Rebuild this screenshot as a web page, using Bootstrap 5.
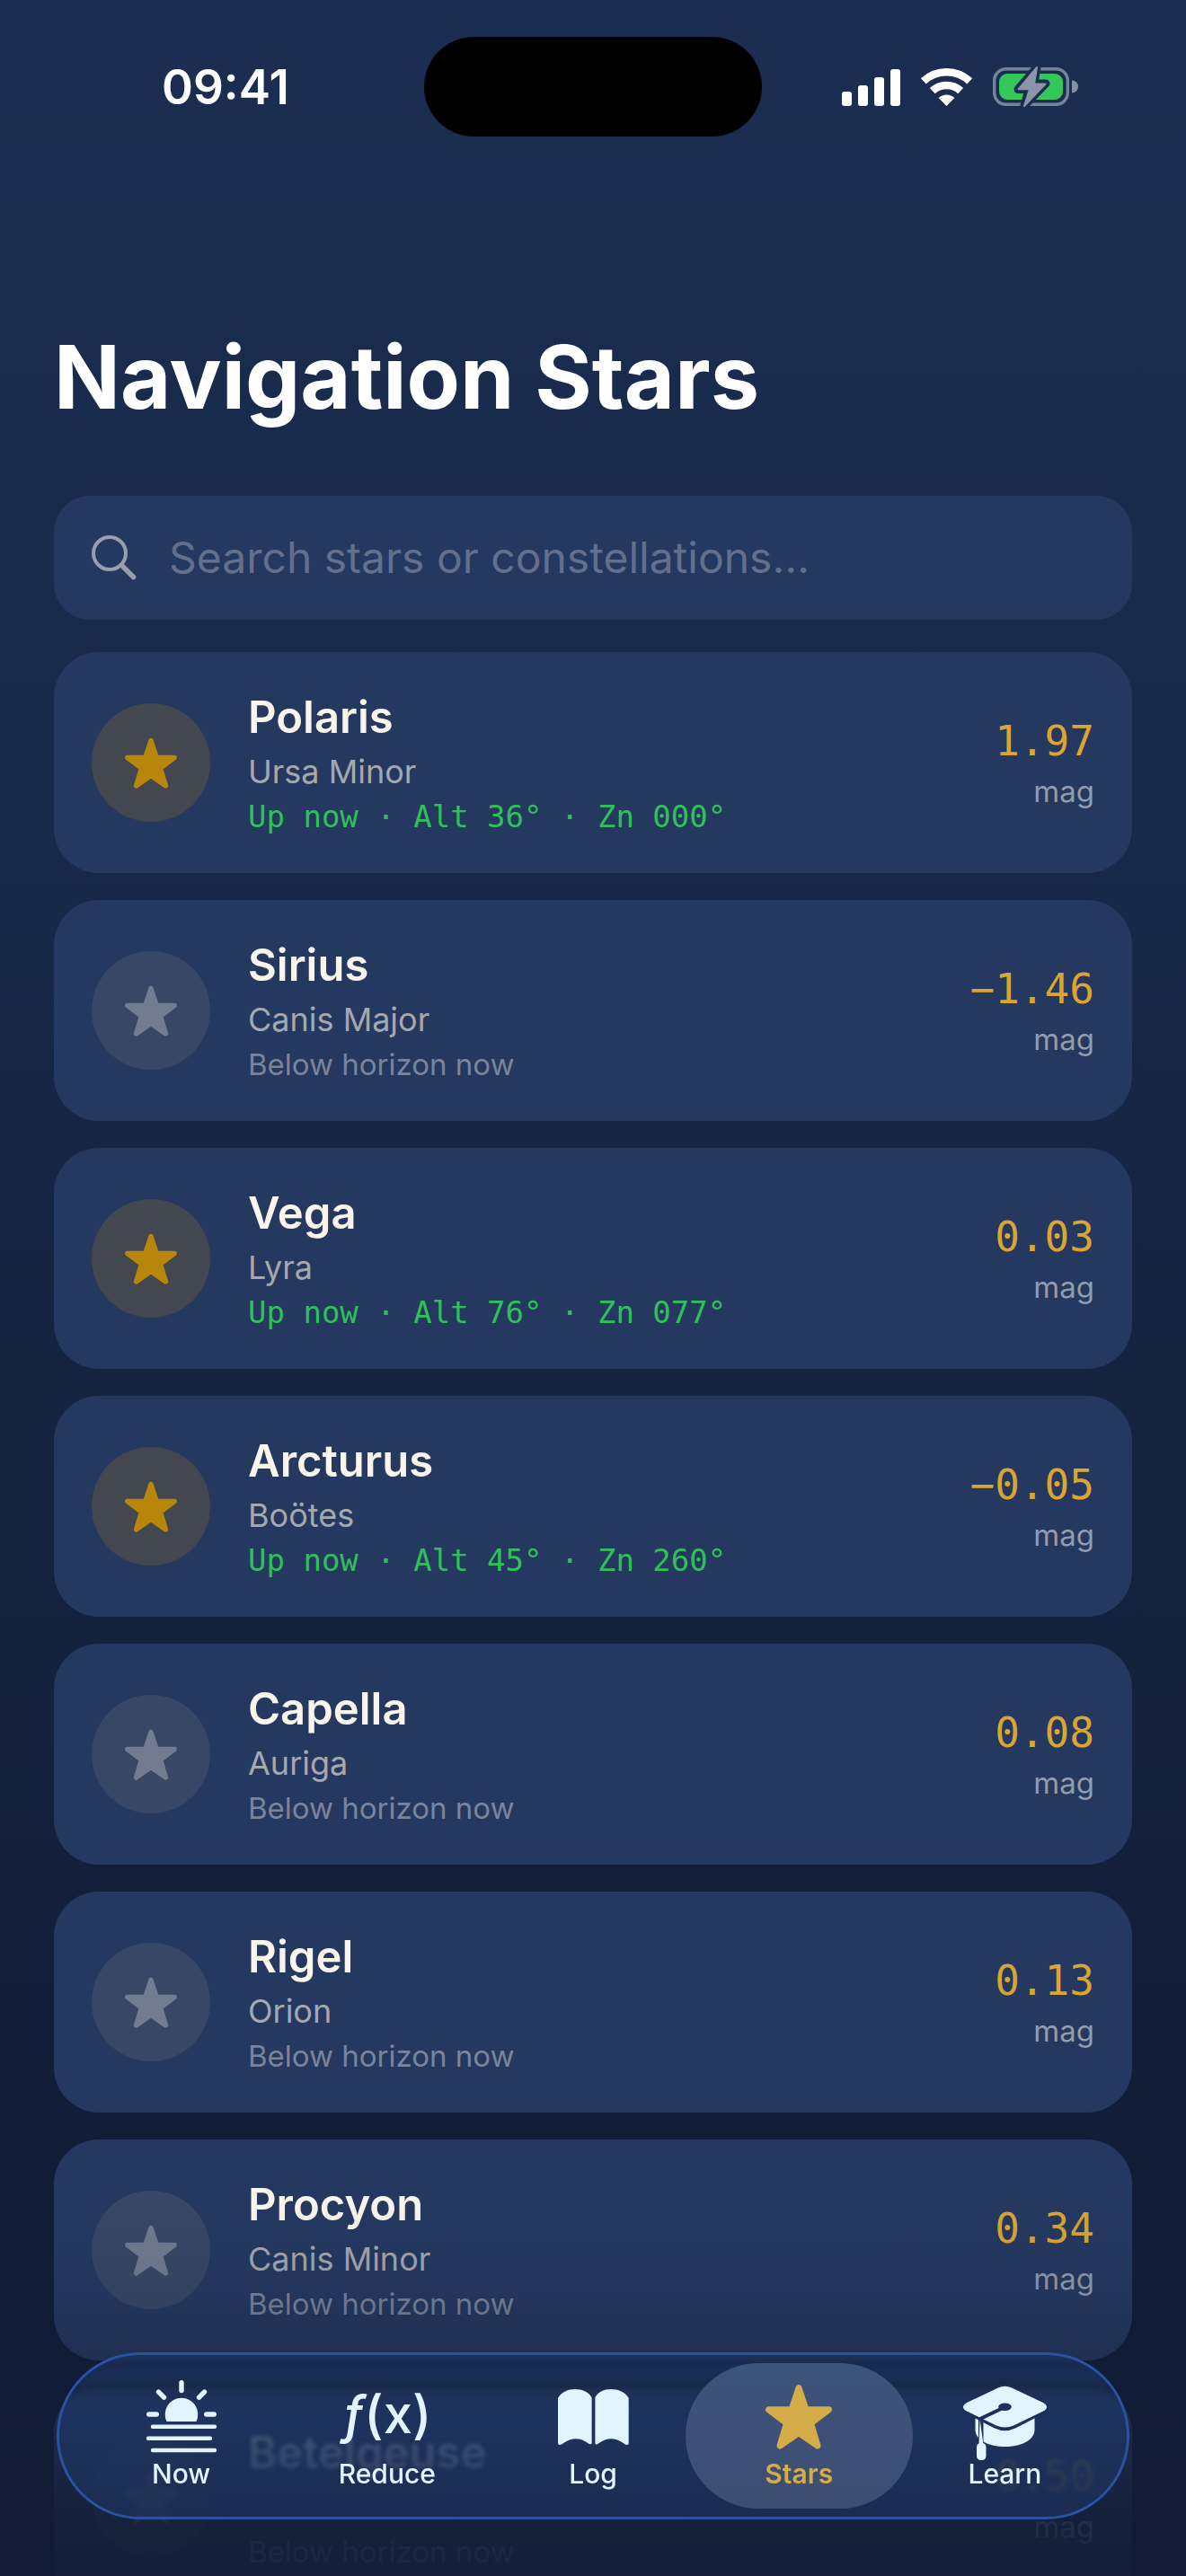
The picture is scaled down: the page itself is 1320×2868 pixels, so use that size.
<!DOCTYPE html>
<html lang="en">
<head>
<meta charset="utf-8">
<meta name="viewport" content="width=device-width, initial-scale=1">
<title>Navigation Stars</title>
<link href="https://cdn.jsdelivr.net/npm/bootstrap@5.3.0/dist/css/bootstrap.min.css" rel="stylesheet">
<style>
  body { font-family: Inter, "Liberation Sans", sans-serif; background: #101b34; color: #fff; }
  .app-shell { background: linear-gradient(180deg, #1b2e51 0%, #182848 33%, #131f3a 75%, #0f1a33 100%); }
  svg { display: block; flex: none; overflow: visible; }

  .status-row { padding-top: 41px; }
  .status-time { padding-left: 180px; font-size: 53px; line-height: 60px; font-weight: 600; }
  .status-icons { padding-right: 122px; gap: 23px; }
  .island { width: 376px; height: 111px; background: #000; border-radius: 56px; }

  .page-body { padding: 208px 60px 0; }
  .page-title { font-size: 97px; line-height: 120px; font-weight: 700; margin-bottom: 72px; }

  .search-box { height: 138px; padding: 0 42px; gap: 36px; border-radius: 40px; background: #25385f; margin-bottom: 36px; color: #989eab; }
  .search-box .form-control, .search-box .form-control:focus { font-size: 48px; line-height: 60px; color: #faf5ea; }
  .search-box .form-control::placeholder { color: #636f8b; opacity: 1; }

  .star-list { gap: 30px; }
  .star-card { min-height: 246px; padding: 0 42px; gap: 42px; border-radius: 50px; background: #25385f; }
  .star-disc { width: 132px; height: 132px; background: #384766; color: #727c90; }
  .star-up .star-disc { background: #424750; color: #b8860b; }
  .star-info, .star-mag { gap: 9px; }
  .star-name { font-size: 49px; line-height: 60px; font-weight: 600; color: #faf5ea; }
  .star-con { font-size: 36px; line-height: 42px; color: #a5a8af; }
  .star-pos { font-size: 33px; line-height: 40px; color: #7b8499; }
  .star-up .star-pos { font-family: "DejaVu Sans Mono", monospace; font-size: 34px; color: #30c05a; }
  .mag-value { font-family: "DejaVu Sans Mono", monospace; font-size: 46px; line-height: 54px; color: #daa532; }
  .mag-unit { font-size: 33px; line-height: 40px; color: #949bab; }

  .scroll-fade { height: 420px; pointer-events: none; background: linear-gradient(180deg, rgba(18,28,53,0) 0%, rgba(18,28,53,.1) 25%, rgba(18,28,53,.3) 43%, rgba(18,28,53,.6) 67%, rgba(18,28,53,.86) 85%, rgba(18,28,53,.92) 100%); }

  .tab-dock { left: 63px; right: 63px; bottom: 63px; height: 186px; padding: 9px 21px; border: 3px solid #2952a3; border-radius: 93px; background: linear-gradient(180deg, rgba(28,47,84,.65) 0%, rgba(30,56,106,.65) 12%, rgba(27,48,84,.65) 20%, rgba(30,56,106,.65) 32%, rgba(30,51,92,.65) 100%); backdrop-filter: blur(2px); }
  .tab-link { margin: 0 -12px; padding: 17px 0 21px; gap: 4px; border-radius: 81px; color: #e2f4ff; font-size: 30px; line-height: 36px; font-weight: 500; text-decoration: none; }
  .tab-link.active { background: linear-gradient(180deg, #3c547b, #3e5078 50%, #3c4f70); color: #d5ad48; font-weight: 600; }
  .tab-icon { height: 84px; }
  .fx-icon { font-size: 58px; line-height: 80px; }
</style>
<script src="https://cdn.jsdelivr.net/npm/bootstrap@5.3.0/dist/js/bootstrap.bundle.min.js"></script>
</head>
<body>
<svg width="0" height="0" class="position-absolute" aria-hidden="true">
  <symbol id="star" viewBox="0 0 76 73">
    <path d="M38 4.5 46 28.8H71.5L51.5 44 59 69 38 54.5 17 69 24.5 44 4.5 28.8H30Z" fill="currentColor" stroke="currentColor" stroke-width="7" stroke-linejoin="round"/>
  </symbol>
</svg>

<div class="app-shell position-relative vh-100 overflow-hidden">
  <header class="status-row d-flex align-items-center">
    <div class="status-time flex-fill w-25">09:41</div>
    <div class="island flex-shrink-0"></div>
    <div class="status-icons flex-fill w-25 d-flex align-items-center justify-content-end">
      <svg width="65" height="42" viewBox="0 0 65 42" fill="#fff" aria-label="Signal">
        <rect x="0" y="26" width="11" height="16" rx="3"/><rect x="18" y="19" width="11" height="23" rx="3"/>
        <rect x="36" y="10" width="11" height="32" rx="3"/><rect x="54" y="1" width="11" height="41" rx="3"/>
      </svg>
      <svg width="57" height="42" viewBox="0 0 57 42" aria-label="Wi-Fi">
        <path d="M2.8 14.4A37.7 37.7 0 0 1 54.2 14.4M12.8 25.2A23 23 0 0 1 44.2 25.2" fill="none" stroke="#fff" stroke-width="8.6"/>
        <path d="M28.5 42 19.6 33A13 13 0 0 1 37.4 33Z" fill="#fff"/>
      </svg>
      <svg width="93" height="43" viewBox="0 0 93 43" aria-label="Battery charging">
        <rect x="1.7" y="1.7" width="81.6" height="39.6" rx="13" fill="none" stroke="#77839b" stroke-width="3.4"/>
        <rect x="7" y="7" width="71" height="29" rx="9" fill="#34c759"/>
        <path d="M88 14.5A7 7 0 0 1 88 28.5Z" fill="#8590a5"/>
        <path d="M49 0 28 24.5H40L35 43 59 18H46Z" fill="#1b2d50" stroke="#1b2d50" stroke-width="9" stroke-linejoin="round"/>
        <path d="M49 0 28.5 24.3H41L35 43 58.5 18.5H46Z" fill="#8c95a8" stroke="#8c95a8" stroke-width="2" stroke-linejoin="round"/>
      </svg>
    </div>
  </header>

  <main class="page-body">
    <h1 class="page-title">Navigation Stars</h1>

    <div class="search-box d-flex align-items-center">
      <label for="starSearch" aria-label="Search">
        <svg width="50" height="50" viewBox="0 0 50 50" fill="none" stroke="currentColor" stroke-linecap="round">
          <circle cx="20" cy="20" r="18" stroke-width="4"/><path d="M33.5 33.5 46.5 46.5" stroke-width="5.5"/>
        </svg>
      </label>
      <input id="starSearch" type="text" class="form-control border-0 bg-transparent shadow-none p-0" placeholder="Search stars or constellations…">
    </div>

    <div class="star-list d-flex flex-column">
      <article class="star-card star-up d-flex align-items-center">
        <div class="star-disc rounded-circle d-flex align-items-center justify-content-center"><svg width="60" height="57"><use href="#star"/></svg></div>
        <div class="star-info d-flex flex-column flex-fill"><div class="star-name">Polaris</div><div class="star-con">Ursa Minor</div><div class="star-pos">Up now · Alt 36° · Zn 000°</div></div>
        <div class="star-mag d-flex flex-column text-end"><div class="mag-value">1.97</div><div class="mag-unit">mag</div></div>
      </article>
      <article class="star-card d-flex align-items-center">
        <div class="star-disc rounded-circle d-flex align-items-center justify-content-center"><svg width="60" height="57"><use href="#star"/></svg></div>
        <div class="star-info d-flex flex-column flex-fill"><div class="star-name">Sirius</div><div class="star-con">Canis Major</div><div class="star-pos">Below horizon now</div></div>
        <div class="star-mag d-flex flex-column text-end"><div class="mag-value">−1.46</div><div class="mag-unit">mag</div></div>
      </article>
      <article class="star-card star-up d-flex align-items-center">
        <div class="star-disc rounded-circle d-flex align-items-center justify-content-center"><svg width="60" height="57"><use href="#star"/></svg></div>
        <div class="star-info d-flex flex-column flex-fill"><div class="star-name">Vega</div><div class="star-con">Lyra</div><div class="star-pos">Up now · Alt 76° · Zn 077°</div></div>
        <div class="star-mag d-flex flex-column text-end"><div class="mag-value">0.03</div><div class="mag-unit">mag</div></div>
      </article>
      <article class="star-card star-up d-flex align-items-center">
        <div class="star-disc rounded-circle d-flex align-items-center justify-content-center"><svg width="60" height="57"><use href="#star"/></svg></div>
        <div class="star-info d-flex flex-column flex-fill"><div class="star-name">Arcturus</div><div class="star-con">Boötes</div><div class="star-pos">Up now · Alt 45° · Zn 260°</div></div>
        <div class="star-mag d-flex flex-column text-end"><div class="mag-value">−0.05</div><div class="mag-unit">mag</div></div>
      </article>
      <article class="star-card d-flex align-items-center">
        <div class="star-disc rounded-circle d-flex align-items-center justify-content-center"><svg width="60" height="57"><use href="#star"/></svg></div>
        <div class="star-info d-flex flex-column flex-fill"><div class="star-name">Capella</div><div class="star-con">Auriga</div><div class="star-pos">Below horizon now</div></div>
        <div class="star-mag d-flex flex-column text-end"><div class="mag-value">0.08</div><div class="mag-unit">mag</div></div>
      </article>
      <article class="star-card d-flex align-items-center">
        <div class="star-disc rounded-circle d-flex align-items-center justify-content-center"><svg width="60" height="57"><use href="#star"/></svg></div>
        <div class="star-info d-flex flex-column flex-fill"><div class="star-name">Rigel</div><div class="star-con">Orion</div><div class="star-pos">Below horizon now</div></div>
        <div class="star-mag d-flex flex-column text-end"><div class="mag-value">0.13</div><div class="mag-unit">mag</div></div>
      </article>
      <article class="star-card d-flex align-items-center">
        <div class="star-disc rounded-circle d-flex align-items-center justify-content-center"><svg width="60" height="57"><use href="#star"/></svg></div>
        <div class="star-info d-flex flex-column flex-fill"><div class="star-name">Procyon</div><div class="star-con">Canis Minor</div><div class="star-pos">Below horizon now</div></div>
        <div class="star-mag d-flex flex-column text-end"><div class="mag-value">0.34</div><div class="mag-unit">mag</div></div>
      </article>
      <article class="star-card d-flex align-items-center">
        <div class="star-disc rounded-circle d-flex align-items-center justify-content-center"><svg width="60" height="57"><use href="#star"/></svg></div>
        <div class="star-info d-flex flex-column flex-fill"><div class="star-name">Betelgeuse</div><div class="star-con">&nbsp;</div><div class="star-pos">Below horizon now</div></div>
        <div class="star-mag d-flex flex-column text-end"><div class="mag-value">0.50</div><div class="mag-unit">mag</div></div>
      </article>
    </div>
  </main>

  <div class="scroll-fade position-absolute bottom-0 start-0 end-0"></div>

  <nav class="tab-dock position-absolute d-flex" aria-label="Main">
    <div class="flex-fill w-25"><a href="#now" class="tab-link d-flex flex-column align-items-center">
      <svg class="tab-icon" width="100" height="84" viewBox="0 0 100 84" stroke="currentColor" stroke-linecap="round" fill="none" aria-hidden="true">
        <path d="M50 4.7V13.5M24.5 15.2 30.5 21.2M75.5 15.2 69.5 21.2M13.7 40H22.3M77.7 40H86.3" stroke-width="5.4"/>
        <path d="M33.5 48A18.3 18.3 0 1 1 66.5 48Z" fill="currentColor" stroke="none"/>
        <path d="M18 53.7H87M13 66.7H82M18 80H87" stroke-width="4.4"/>
      </svg><span>Now</span></a></div>
    <div class="flex-fill w-25"><a href="#reduce" class="tab-link d-flex flex-column align-items-center">
      <span class="tab-icon fx-icon" aria-hidden="true"><i>ƒ</i>(x)</span><span>Reduce</span></a></div>
    <div class="flex-fill w-25"><a href="#log" class="tab-link d-flex flex-column align-items-center">
      <svg class="tab-icon" width="100" height="84" viewBox="0 0 100 84" fill="currentColor" aria-hidden="true">
        <path d="M11 22C15 15 22 12 30 12S45 15 48.6 21V72.5Q47 74 45 72.5Q31 62 16.5 72.5Q12 75.5 11 72.5Z"/>
        <path d="M52.4 21C56 15 62 12 70 12S86 15 89.700 22V72.500Q88.500 75.500 84.500 72.500Q70 62 56 72.500Q53 74.500 52.400 72.500Z"/>
      </svg><span>Log</span></a></div>
    <div class="flex-fill w-25"><a href="#stars" class="tab-link active d-flex flex-column align-items-center" aria-current="page">
      <span class="tab-icon d-flex align-items-center"><svg width="76" height="73" aria-hidden="true"><use href="#star"/></svg></span><span>Stars</span></a></div>
    <div class="flex-fill w-25"><a href="#learn" class="tab-link d-flex flex-column align-items-center">
      <svg class="tab-icon" width="100" height="84" viewBox="0 0 100 84" fill="currentColor" aria-hidden="true">
        <path d="M17.5 44V57C17.5 69 33 76 50.5 76S83.5 69 83.5 57V44Z"/>
        <path d="M44 13.5Q50.5 9 57 13.5L91 29Q97 32 91 35.5L60 51.500Q50.500 56 41 51.500L10 35.500Q4 32 10 29Z" stroke="#1d3059" stroke-width="9"/>
        <path d="M43 10.5Q50.5 7 58 10.5L93 27Q101 32 93 36.5L60 52.5Q50.5 56.5 41 52.5L8 36.5Q0 32 8 27Z"/>
        <ellipse cx="50.5" cy="31.7" rx="7.3" ry="4.2" fill="#1d3059"/>
        <path d="M48 33 23 45V72" fill="none" stroke="#1d3059" stroke-width="4"/>
        <path d="M24 45V76" fill="none" stroke="#1d3059" stroke-width="5"/>
        <path d="M23 48 26.5 74H21.5L22.5 47Z"/>
        <rect x="19" y="72" width="10.5" height="19" rx="4.5"/>
      </svg><span>Learn</span></a></div>
  </nav>
</div>
</body>
</html>
